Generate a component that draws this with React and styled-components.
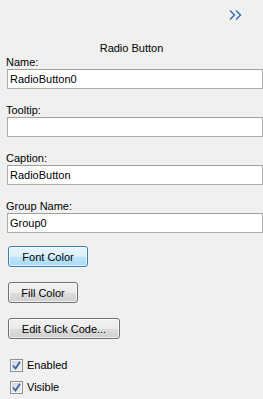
import React from "react";
import styled, { createGlobalStyle } from "styled-components";

const GlobalStyle = createGlobalStyle`
  html, body {
    margin: 0;
    padding: 0;
    background: #f0f0f0;
  }
  body {
    font-family: "Liberation Sans", Arial, sans-serif;
    font-size: 11px;
    color: #000;
  }
`;

const Panel = styled.div`
  width: 263px;
  height: 399px;
  box-sizing: border-box;
  padding: 10px 0 0 6px;
  display: flex;
  flex-direction: column;
`;

const TopBar = styled.div`
  display: flex;
  justify-content: flex-end;
  padding-right: 20px;
  height: 10px;
`;

const Title = styled.div`
  text-align: center;
  margin-top: 22px;
  padding-right: 6px;
  line-height: 13px;
  height: 13px;
`;

const Field = styled.div`
  display: flex;
  flex-direction: column;
  margin-top: ${(p) => p.$gap}px;
`;

const Label = styled.label`
  line-height: 13px;
  height: 13px;
`;

const Input = styled.input`
  box-sizing: border-box;
  width: 256px;
  height: 20px;
  margin: 0 0 0 1px;
  border: 1px solid #abadb3;
  border-top-color: #a0a0a0;
  background: #fff;
  padding: 0 2px;
  font: inherit;
  color: #000;
  outline: none;
`;

const Button = styled.button`
  box-sizing: border-box;
  width: ${(p) => p.$w}px;
  height: 21px;
  margin-left: 2px;
  margin-top: ${(p) => p.$gap}px;
  padding: 0;
  font: inherit;
  color: #000;
  border-radius: 3px;
  border: 1px solid ${(p) => (p.$active ? "#3c7fb1" : "#707070")};
  background: ${(p) =>
    p.$active
      ? "linear-gradient(to bottom, #eaf6fd 0%, #d9f0fc 50%, #bee6fd 51%, #a7d9f5 100%)"
      : "linear-gradient(to bottom, #f2f2f2 0%, #ebebeb 50%, #dddddd 51%, #cfcfcf 100%)"};
  box-shadow: inset 0 0 0 1px rgba(255, 255, 255, 0.7);
`;

const CheckRow = styled.label`
  display: flex;
  align-items: center;
  gap: 4px;
  margin-left: 4px;
  margin-top: ${(p) => p.$gap}px;
  height: 13px;
  line-height: 13px;
`;

const Box = styled.span`
  box-sizing: border-box;
  width: 13px;
  height: 13px;
  border: 1px solid #8e8f8f;
  box-shadow: inset 0 0 0 1px #f4f4f4;
  background: linear-gradient(135deg, #cfd3da, #f2f3f5);
  display: flex;
  align-items: center;
  justify-content: center;
`;

const Chevron = () => (
  <svg width="14" height="10" viewBox="0 0 14 10">
    <path d="M1 0.5 L5.5 5 L1 9.5 M7 0.5 L11.5 5 L7 9.5" fill="none" stroke="#3b6dab" strokeWidth="1.5" />
  </svg>
);

const Check = () => (
  <svg width="9" height="9" viewBox="0 0 9 9">
    <path d="M1 4.5 L3.5 7.5 L8 0.8" fill="none" stroke="#3f5fa6" strokeWidth="1.8" />
  </svg>
);

export default function App() {
  return (
    <>
      <GlobalStyle />
      <Panel>
        <TopBar>
          <Chevron />
        </TopBar>
        <Title>Radio Button</Title>
        <Field $gap={1}>
          <Label>Name:</Label>
          <Input defaultValue="RadioButton0" />
        </Field>
        <Field $gap={15}>
          <Label>Tooltip:</Label>
          <Input defaultValue="" />
        </Field>
        <Field $gap={15}>
          <Label>Caption:</Label>
          <Input defaultValue="RadioButton" />
        </Field>
        <Field $gap={15}>
          <Label>Group Name:</Label>
          <Input defaultValue="Group0" />
        </Field>
        <Button $w={80} $gap={13} $active>Font Color</Button>
        <Button $w={70} $gap={15}>Fill Color</Button>
        <Button $w={112} $gap={15}>Edit Click Code...</Button>
        <CheckRow $gap={20}>
          <Box><Check /></Box>
          Enabled
        </CheckRow>
        <CheckRow $gap={9}>
          <Box><Check /></Box>
          Visible
        </CheckRow>
      </Panel>
    </>
  );
}
